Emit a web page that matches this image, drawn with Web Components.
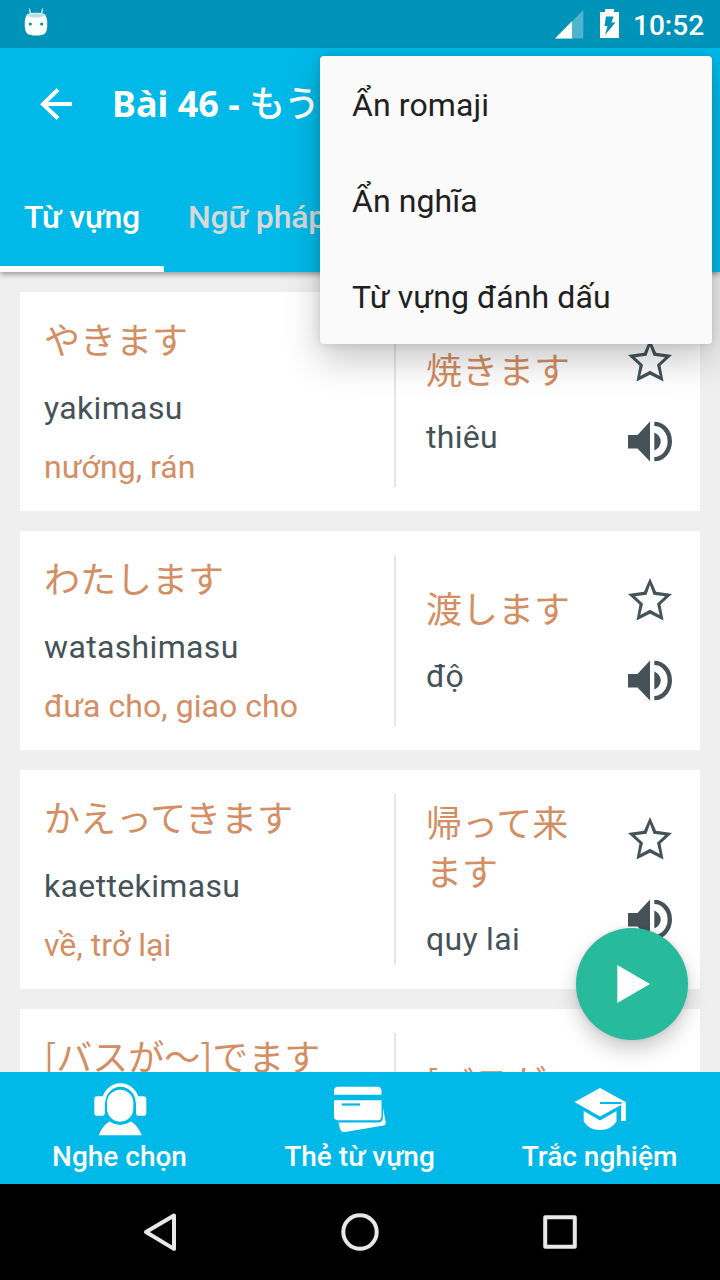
<!DOCTYPE html>
<html lang="vi">
<head>
<meta charset="utf-8">
<title>Bài 46</title>
<style>
html,body{margin:0;padding:0}
body{width:720px;height:1280px;overflow:hidden;font-family:Roboto,"Noto Sans CJK JP",sans-serif;background:#efefef}
</style>
</head>
<body>
<lesson-screen></lesson-screen>
<script>
function define(name, html) {
  const t = document.createElement('template');
  t.innerHTML = html;
  customElements.define(name, class extends HTMLElement {
    constructor() {
      super();
      this.attachShadow({ mode: 'open' }).appendChild(t.content.cloneNode(true));
    }
  });
}

define('status-bar', `
<style>
:host{display:flex;height:48px;background:#0093b9;color:#fff;align-items:center;justify-content:space-between;padding:0 16px 0 24px;box-sizing:border-box}
.right{display:flex;align-items:center}
.time{font-size:28px;font-weight:500;line-height:48px;padding-top:3px;width:71px;margin-left:14px;white-space:nowrap}
svg{display:block}
</style>
<svg width="24" height="48" viewBox="0 0 24 48">
  <path d="M5.4 9l1.2 5M18.6 9l-1.2 5" stroke="#e5f5f9" stroke-width="1.2" stroke-linecap="round"/>
  <path d="M3.5 14Q12 11.5 20.500 14Q23.300 17 23.300 24Q23.300 31 21 33.500Q18 35.500 12 35.500Q6 35.500 3 33.500Q.7 31 .7 24Q.7 17 3.500 14Z" fill="#fff"/>
  <path d="M2.800 14.800Q12 11.500 21.200 14.800Q20 17.600 12 17.600Q4 17.600 2.800 14.800Z" fill="#b8e0eb"/>
  <circle cx="6.300" cy="24" r="1.600" fill="#0093b9"/><circle cx="17.700" cy="24" r="1.600" fill="#0093b9"/>
</svg>
<div class="right">
  <svg width="29" height="48" viewBox="0 0 29 48"><path d="M0 38.500L28.300 10V38.500Z" fill="#4fb4ce"/><path d="M0 38.500L17 21.300V38.500Z" fill="#fff"/></svg>
  <svg width="19" height="48" viewBox="0 0 19 48" style="margin-left:16px"><path d="M0 12H5V9H14V12H19V38H0Z" fill="#fff"/><path d="M6 16.500H13.500L11.500 22.500H15.500L5 35L7.500 26H4.500Z" fill="#0093b9"/></svg>
  <div class="time">10:52</div>
</div>`);

define('app-toolbar', `
<style>
:host{display:flex;height:112px;align-items:center;padding-left:32px;box-sizing:border-box;color:#fff}
svg{display:block;flex:none}
h1{margin:-4px 0 0 32px;font:700 36px/50px "Noto Sans","Noto Sans CJK JP",sans-serif;white-space:nowrap}
</style>
<svg width="48" height="48" viewBox="0 0 48 48"><path d="M40 24H11M26 9.500L11 24.300L26 38.500" fill="none" stroke="#fff" stroke-width="4"/></svg>
<h1><slot></slot></h1>`);

define('app-tab', `
<style>
:host{display:block;box-sizing:border-box;height:112px;padding:38px 24px 0;font-size:32px;font-weight:500;line-height:38px;letter-spacing:-.15px;color:#d8d8d8;white-space:nowrap}
:host([selected]){color:#fff;border-bottom:6px solid #fff;width:164px}
</style><slot></slot>`);

define('vocab-card', `
<style>
:host{display:flex;height:219px;flex:none;box-sizing:border-box;background:#fff;padding:24px 26px 24px 24px;align-items:stretch}
.left{width:350px;display:flex;flex-direction:column}
.right{flex:none;width:180px;box-sizing:border-box;border-left:2px solid #e6e6e6;padding-left:30px;display:flex;flex-direction:column;justify-content:center;margin-right:52px}
::slotted(*){display:block;font-size:32px;line-height:38px;color:#455359}
::slotted([slot=kana]),::slotted([slot=kanji]){font-family:"Noto Sans CJK JP",sans-serif;font-size:36px;line-height:49px;color:#d38e63}
::slotted([slot=kana]){white-space:nowrap;margin:-2px 0 26px}
::slotted([slot=romaji]){margin-bottom:21px;letter-spacing:.35px}
::slotted([slot=meaning]){color:#d38e63;letter-spacing:.06px;white-space:nowrap}
::slotted([slot=kanji]){line-break:anywhere;word-break:break-all;margin:-4px 0 25px}
::slotted([slot=viet]){letter-spacing:.3px}
.icons{display:flex;flex:none;flex-direction:column;justify-content:center;width:48px;gap:32px;margin-right:-26px;padding-bottom:2px}
svg{display:block;flex:none;fill:#455359}
</style>
<div class="left"><slot name="kana"></slot><slot name="romaji"></slot><slot name="meaning"></slot></div>
<div class="right"><slot name="kanji"></slot><slot name="viet"></slot></div>
<div class="icons">
<svg width="48" height="48" viewBox="0 0 48 48"><path fill-rule="evenodd" d="M24 2L30 15.800L46 18L34.500 28.500L37.500 44.500L24 37.700L10.500 44.500L13.500 28.500L2 18L18 15.800ZM24 9L20.500 18.700L9 20.300L17 27.700L14.300 39L24 33.700L33.700 39L31 27.700L39 20.300L27.500 18.700Z"/></svg>
<svg width="48" height="48" viewBox="0 0 48 48"><path d="M2 18H11.500L24 4.500V44.500L11.500 31.500H2ZM28.300 15.500Q34.700 18.500 34.700 24.500Q34.700 30.500 28.300 33.500Z"/><path d="M28.300 6.900A15.500 17.600 0 0 1 28.300 42.100" fill="none" stroke="#455359" stroke-width="4.400"/></svg>
</div>`);

define('play-fab', `
<style>
:host{display:flex;position:absolute;left:576px;top:928px;width:112px;height:112px;border-radius:50%;background:#27ba9b;align-items:center;justify-content:center;box-shadow:0 10px 20px rgba(0,0,0,.2),0 0 4px rgba(0,0,0,.12)}
</style>
<svg width="112" height="112" viewBox="0 0 112 112"><path d="M41.300 37L74 56L41.300 75Z" fill="#fff"/></svg>`);

define('popup-menu', `
<style>
:host{display:flex;flex-direction:column;position:absolute;left:320px;top:56px;width:392px;height:288px;background:#fafafa;border-radius:4px;box-shadow:0 16px 36px rgba(0,0,0,.22),0 0 10px rgba(0,0,0,.12)}
::slotted(*){height:96px;box-sizing:border-box;padding:30px 32px;line-height:38px;font-size:32px;letter-spacing:.1px;color:#212121;white-space:nowrap}
</style><slot></slot>`);

define('practice-item', `
<style>
:host{display:flex;flex:1;flex-direction:column;align-items:center;color:#fff;font-size:28px;font-weight:500;white-space:nowrap}
div{line-height:34px;margin:-2px 1px 0 0}
::slotted(svg){display:block;margin-top:4px}
</style><slot name="icon"></slot><div><slot></slot></div>`);

define('system-nav', `
<style>
:host{display:flex;height:96px;background:#000;justify-content:center;gap:104px;align-items:center}
svg{fill:none;stroke:#e8e8e8;stroke-width:4;stroke-linejoin:round}
</style>
<svg width="96" height="96" viewBox="0 0 96 96"><path d="M34 48L62 31.500V64.900Z"/></svg>
<svg width="96" height="96" viewBox="0 0 96 96"><circle cx="48" cy="48" r="16.700"/></svg>
<svg width="96" height="96" viewBox="0 0 96 96"><rect x="33.200" y="33.200" width="29.600" height="29.600"/></svg>`);

define('lesson-screen', `
<style>
:host{display:flex;flex-direction:column;position:relative;width:720px;height:1280px;overflow:hidden;background:#efefef}
header{background:#00b9e8;height:224px;flex:none;position:relative;box-shadow:0 2px 6px rgba(0,0,0,.4)}
.tabs{display:flex}
main{flex:1;min-height:0;overflow:hidden;display:flex;flex-direction:column;gap:20px;padding:20px 20px 0}
footer{display:flex;height:112px;flex:none;background:#00b9e8;position:relative}
status-bar{flex:none;position:relative;z-index:1}
.jp{font-weight:500;font-family:"Noto Sans CJK JP",sans-serif}
.tall{height:257px}
.tall [slot=kanji]{height:133px}
</style>
<status-bar></status-bar>
<header>
  <app-toolbar>Bài 46 - <span class="jp">もう</span></app-toolbar>
  <div class="tabs"><app-tab selected>Từ vựng</app-tab><app-tab>Ngữ pháp</app-tab></div>
</header>
<main>
  <vocab-card><span slot="kana">やきます</span><span slot="romaji">yakimasu</span><span slot="meaning">nướng, rán</span><span slot="kanji">焼きます</span><span slot="viet">thiêu</span></vocab-card>
  <vocab-card><span slot="kana">わたします</span><span slot="romaji">watashimasu</span><span slot="meaning">đưa cho, giao cho</span><span slot="kanji">渡します</span><span slot="viet">độ</span></vocab-card>
  <vocab-card><span slot="kana">かえってきます</span><span slot="romaji">kaettekimasu</span><span slot="meaning">về, trở lại</span><span slot="kanji">帰って来ます</span><span slot="viet">quy lai</span></vocab-card>
  <vocab-card class="tall"><span slot="kana">[バスが～]でます</span><span slot="kanji">[バスが</span></vocab-card>
</main>
<footer>
  <practice-item>
    <svg slot="icon" width="70" height="66" viewBox="0 0 70 66" fill="#fff"><path d="M18.500 27A17 18 0 0 1 52.500 27" fill="none" stroke="#fff" stroke-width="3.600"/><rect x="9.300" y="20.300" width="10.500" height="19.400" rx="2.800"/><rect x="51" y="20.300" width="10.300" height="19.400" rx="2.800"/><rect x="22" y="13.700" width="26.300" height="32" rx="13.100"/><path d="M13.700 59.300Q17.500 49.500 24.500 45.500Q35 52.500 46 45.500Q53 49.500 56.700 59.300Z"/></svg>
    Nghe chọn</practice-item>
  <practice-item>
    <svg slot="icon" width="70" height="66" viewBox="0 0 70 66" fill="#fff"><path d="M9 18.700V15Q9 10.700 13 10.700H52.500Q56.500 10.700 56.500 15V18.700ZM9 24.300H56.500V40.500Q56.500 44.300 52.500 44.300H13Q9 44.300 9 40.500ZM13.500 46.500H53Q58 46.500 58 41V32L60.700 46Q61 49 58.500 49.500L20 56Q16 56.500 15 53Z" /><path d="M17 28.500H35" stroke="#00b9e8" stroke-width="2.200"/></svg>
    Thẻ từ vựng</practice-item>
  <practice-item>
    <svg slot="icon" width="70" height="66" viewBox="0 0 70 66" fill="#fff"><path d="M9.500 26L35 12L60.800 26V45H56V29L35 40.500ZM18.700 35L35 44.500L51.500 35V45.500Q46 54 35 54Q24 54 18.700 45.500Z"/><path d="M35 27H56.500" stroke="#00b9e8" stroke-width="2"/></svg>
    Trắc nghiệm</practice-item>
</footer>
<system-nav></system-nav>
<play-fab></play-fab>
<popup-menu style="z-index:2"><div>Ẩn romaji</div><div>Ẩn nghĩa</div><div>Từ vựng đánh dấu</div></popup-menu>`);
</script>
</body>
</html>
